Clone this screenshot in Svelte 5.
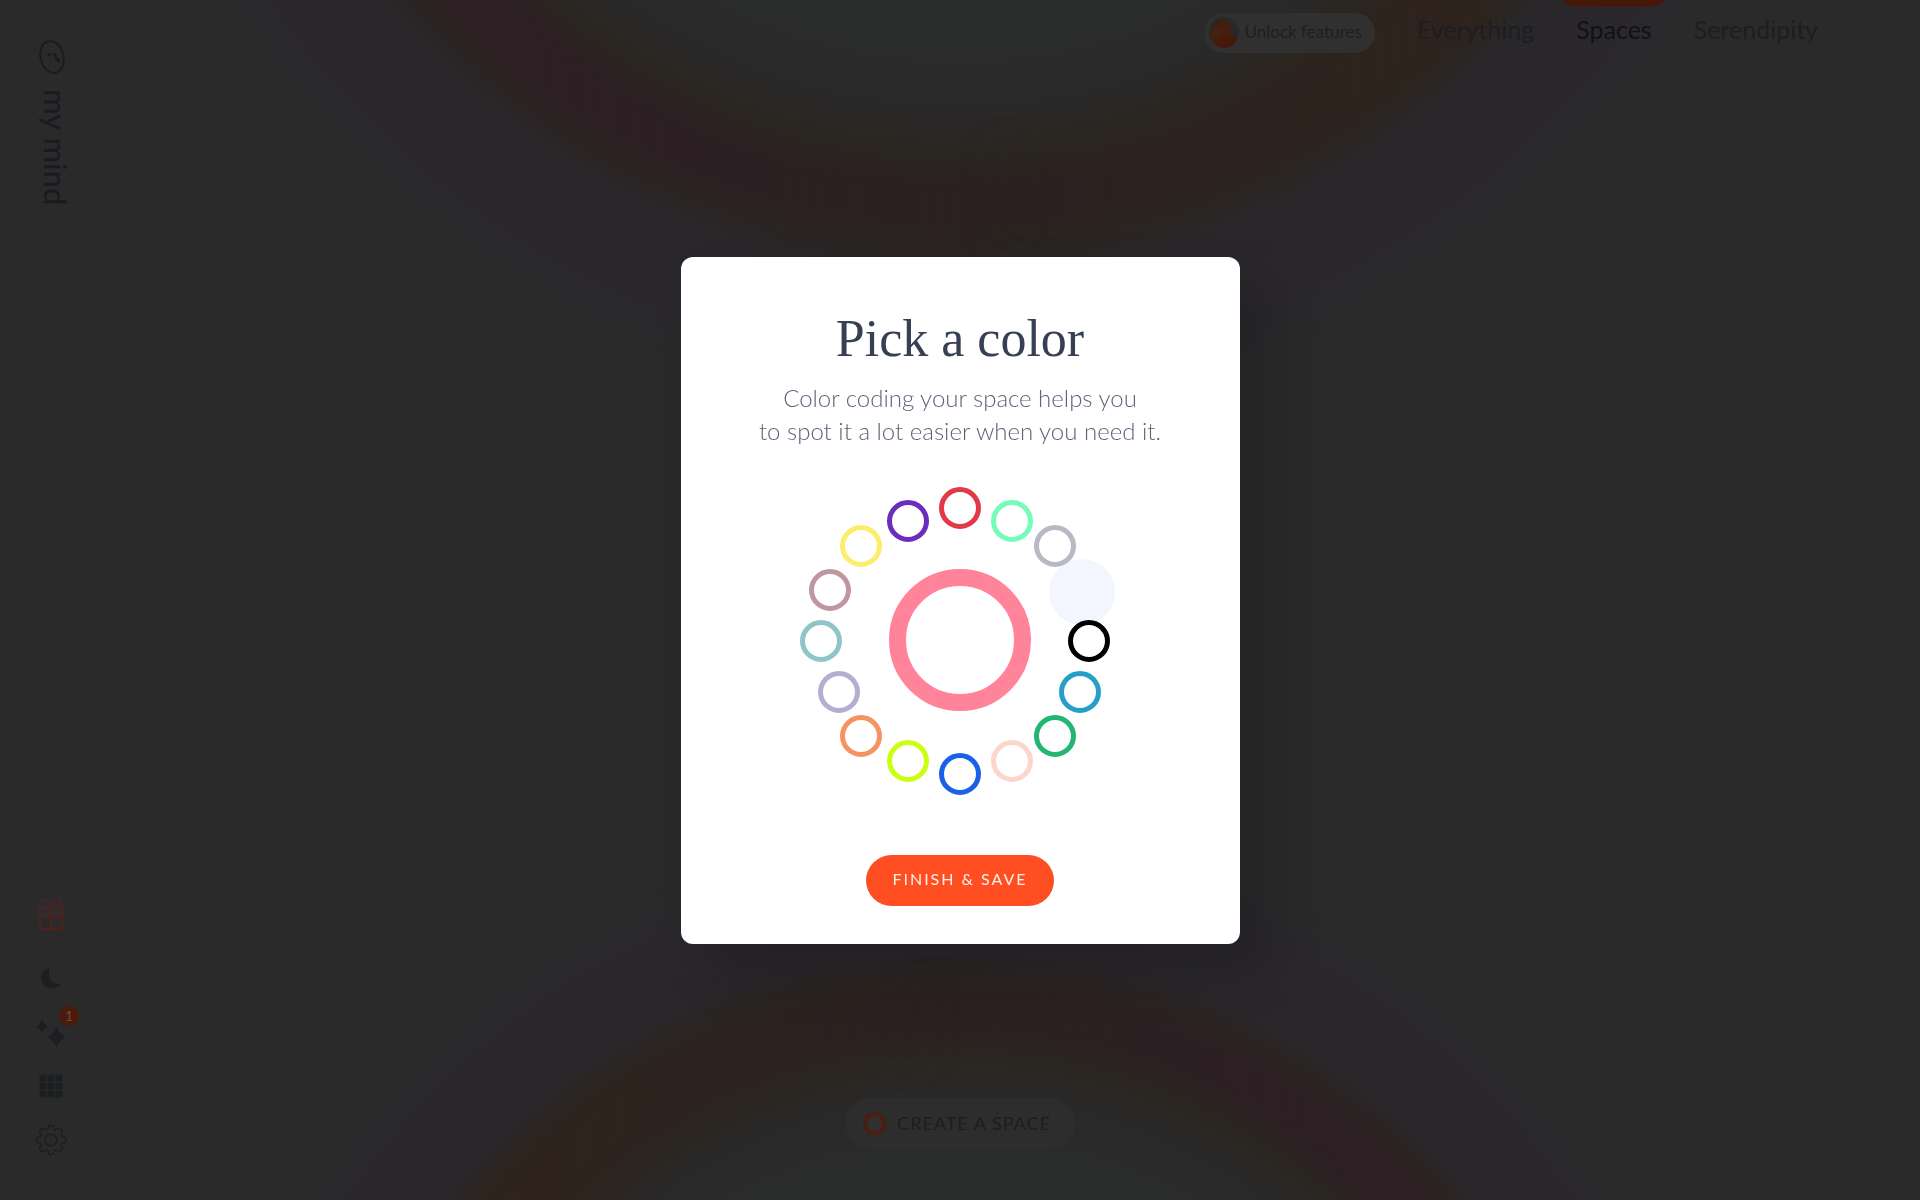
<script>
  const swatches = [
    { name: 'Red', color: '#e03a48', x: 0, y: -133 },
    { name: 'Mint', color: '#74fcb8', x: 52, y: -120 },
    { name: 'Silver', color: '#bab7c6', x: 95, y: -95 },
    { name: 'Black', color: '#000000', x: 129, y: 0 },
    { name: 'Cyan', color: '#259fc6', x: 120, y: 51 },
    { name: 'Green', color: '#23b572', x: 95, y: 95 },
    { name: 'Peach', color: '#fbd6cb', x: 52, y: 120 },
    { name: 'Blue', color: '#1c60e6', x: 0, y: 133 },
    { name: 'Lime', color: '#cbff12', x: -52, y: 120 },
    { name: 'Orange', color: '#f69362', x: -99, y: 95 },
    { name: 'Lavender', color: '#b5aed1', x: -121, y: 51 },
    { name: 'Teal', color: '#8fc5c8', x: -139, y: 0 },
    { name: 'Mauve', color: '#c096a1', x: -130, y: -51 },
    { name: 'Yellow', color: '#fcee6c', x: -99, y: -95 },
    { name: 'Violet', color: '#6a2dbd', x: -52, y: -120 }
  ];
  const pages = ['Everything', 'Spaces', 'Serendipity'];
  let picked = $state('#ff8399');
</script>

<div class="app">
  <div class="aura top"></div>
  <div class="aura bottom"></div>

  <aside>
    <a class="brand" href="#home" aria-label="my mind">
      <svg width="30" height="36" viewBox="0 0 30 36" fill="none" stroke="currentColor">
        <ellipse cx="16" cy="18" rx="11.500" ry="16" transform="rotate(-14 16 18)" stroke-width="1.800" />
        <path d="M18.500 15.500Q19.500 19.500 23 22" stroke-width="2.800" stroke-linecap="round" />
        <circle cx="13.500" cy="15.500" r="1.800" fill="currentColor" stroke="none" />
      </svg>
      <span>my mind</span>
    </a>
    <div class="tools">
      <button class="gift" aria-label="Gift">
        <svg width="28" height="32" viewBox="0 0 28 32" fill="none" stroke-width="2">
          <defs>
            <linearGradient id="giftInk" gradientUnits="userSpaceOnUse" x1="4" y1="2" x2="24" y2="30">
              <stop offset="0" stop-color="#40272e" />
              <stop offset="1" stop-color="#521f14" />
            </linearGradient>
          </defs>
          <g stroke="url(#giftInk)">
            <rect x="1.500" y="9" width="25" height="10" rx="2" fill="#302c2b" />
            <path d="M3 19v9a3 3 0 0 0 3 3h16a3 3 0 0 0 3-3v-9M14 9v22" />
            <path d="M14 9H6C3 6 4 2 7 2s6 2 7 7c1-5 4-7 7-7s4 4 1 7z" />
          </g>
        </svg>
      </button>
      <button class="moon" aria-label="Dark mode">
        <svg width="22" height="24" viewBox="0 0 22 24"><path fill="currentColor" d="M9.500 1.500C2 3.500-1 11 2.500 17.500S16 24.500 21 17.500C13 19 7 13 9.500 1.500z" /></svg>
      </button>
      <button class="spark" aria-label="What's new">
        <svg width="32" height="32" viewBox="0 0 32 32" fill="currentColor">
          <path d="M7 3q1.500 5.500 6 7.500-4.500 2-6 7.500-1.500-5.500-6-7.500 4.500-2 6-7.500z" />
          <path d="M21.500 10q2.500 8 9 11-6.500 3-9 11-2.500-8-9-11 6.500-3 9-11z" />
        </svg>
        <span class="badge">1</span>
      </button>
      <button class="grid" aria-label="Apps">
        <svg width="24" height="24" viewBox="0 0 24 24" fill="currentColor">
          {#each [0, 1, 2] as row}
            {#each [0, 1, 2] as col}
              <rect x={0.5 + col * 8} y={0.5 + row * 8} width="7" height="7" rx="1" />
            {/each}
          {/each}
        </svg>
      </button>
      <button class="gear" aria-label="Settings">
        <svg width="32" height="32" viewBox="0 0 32 32" fill="none" stroke="currentColor" stroke-width="1.500" stroke-linejoin="round">
          <path d="M13 5Q13.400 1.300 16 1.300T19 5q1 1 2.300.5Q24.600 3 26.400 5.600T26 10q.2 1.600 1.300 2Q31 13 31 16t-3.700 3q-1.200.8-1.300 2.200 2.400 3 .4 5t-5-.2q-1.400-.3-2.400 1-.4 3.700-3 3.700t-3-3.700q-1-1.200-2.400-1-3 2.300-5 .2t.4-5Q6 20 4.700 19 1 18.700 1 16t3.700-3Q6 12 6 10.700q-2.300-3-.4-5t5-.2Q12 6 13 5z" />
          <circle cx="16" cy="16" r="5.800" />
        </svg>
      </button>
    </div>
  </aside>

  <div class="main">
    <header>
      <button class="unlock">
        <svg width="30" height="32" viewBox="0 0 30 32">
          <defs>
            <linearGradient id="blobInk" x1="0" y1="0" x2=".7" y2="1">
              <stop offset="0" stop-color="#2c201b" />
              <stop offset=".45" stop-color="#48200f" />
              <stop offset="1" stop-color="#461405" />
            </linearGradient>
          </defs>
          <circle cx="15" cy="15" r="15" fill="#292826" />
          <path fill="url(#blobInk)" d="M12 3c6-1 10 3 9 9-1 4 2 7 7 6.500C27 27 21 31 14 31 6 30 1 23 2 15 3 8 6 4 12 3z" />
        </svg>
        <span>Unlock features</span>
      </button>
      <nav>
        {#each pages as page}
          <a href={'#' + page.toLowerCase()} class:active={page === 'Spaces'}>{page}</a>
        {/each}
      </nav>
    </header>
  </div>

  <footer>
    <button class="create"><span class="dot"></span>CREATE A SPACE</button>
  </footer>

  <div class="overlay">
    <form class="modal" role="dialog" aria-modal="true" aria-labelledby="title" onsubmit={(e) => e.preventDefault()}>
      <h1 id="title">Pick a color</h1>
      <p>Color coding your space helps you<br />to spot it a lot easier when you need it.</p>
      <div class="wheel" role="radiogroup" aria-label="Color">
        <span class="halo"></span>
        <span class="current" style:border-color={picked}></span>
        {#each swatches as s}
          <input
            type="radio"
            name="color"
            aria-label={s.name}
            value={s.color}
            bind:group={picked}
            style:--x="{s.x}px"
            style:--y="{s.y}px"
            style:border-color={s.color}
          />
        {/each}
      </div>
      <button class="save">FINISH &amp; SAVE</button>
    </form>
  </div>
</div>

<style>
  :global(body) {
    margin: 0;
    background: #2a2a2a;
  }
  .app {
    position: relative;
    display: grid;
    grid-template-columns: 104px 1fr;
    grid-template-rows: 1fr auto;
    min-height: 100vh;
    overflow: hidden;
    background: #2a2a2a;
    font-family: Lato, 'Open Sans', sans-serif;
    color: #1c1e22;
  }
  button {
    padding: 0;
    border: 0;
    background: none;
    color: inherit;
    font: inherit;
    cursor: pointer;
  }
  svg {
    display: block;
  }
  a {
    color: inherit;
    text-decoration: none;
  }

  /* Blurred colour rings behind the page */
  .aura,
  .aura::before,
  .aura::after {
    position: absolute;
    border-radius: 50%;
  }
  .aura {
    left: 50%;
    translate: -50% 0;
    background: radial-gradient(
      closest-side,
      #2a2c2b 56%,
      #2a292a 65%,
      #2a2721 70%,
      #2c2122 74%,
      #2c2122 78%,
      #2a2520 80%,
      #29272a 84%,
      #2a282c 94%,
      #2a2a2a 100%
    );
  }
  .aura::before,
  .aura::after {
    content: '';
    inset: 0;
  }
  .aura::before {
    background: radial-gradient(closest-side, transparent 70%, #2e2025 75%, #2e2025 78%, transparent 83%);
    mask-image: linear-gradient(to right, #000 25%, transparent 55%);
  }
  .aura::after {
    background: radial-gradient(closest-side, transparent 66%, #2f241c 74%, #2f241c 78%, transparent 83%);
    mask-image: linear-gradient(to left, #000 20%, transparent 50%);
  }
  .top {
    width: 1772px;
    height: 1772px;
    bottom: calc(100% - 417px);
  }
  .bottom {
    width: 1568px;
    height: 1568px;
    top: calc(100% - 377px);
    rotate: 180deg;
  }

  aside {
    position: relative;
    grid-row: 1 / 3;
    display: flex;
    flex-direction: column;
    align-items: center;
    justify-content: space-between;
    padding: 39px 2px 44px 0;
  }
  .brand {
    display: flex;
    flex-direction: column;
    align-items: center;
    gap: 14px;
    color: #1a1b20;
  }
  .brand span {
    padding-left: 10px;
    writing-mode: vertical-rl;
    font-size: 31px;
    line-height: 32px;
    font-weight: 500;
  }
  .tools {
    display: flex;
    flex-direction: column;
    align-items: center;
  }
  .moon {
    margin-top: 36px;
  }
  .spark {
    position: relative;
    margin-top: 26px;
  }
  .grid {
    margin-top: 26px;
    color: #1c1f22;
  }
  .gear {
    margin-top: 26px;
  }
  .badge {
    position: absolute;
    left: 24px;
    top: -10px;
    width: 20px;
    height: 20px;
    border-radius: 50%;
    background: #4b1a0a;
    color: #6b4a3e;
    font-size: 14px;
    line-height: 20px;
    text-align: center;
  }

  .main {
    position: relative;
  }
  header {
    display: flex;
    justify-content: flex-end;
    align-items: flex-start;
    gap: 42px;
    padding-right: 102px;
  }
  .unlock {
    display: flex;
    align-items: center;
    gap: 6px;
    height: 40px;
    margin-top: 13px;
    padding: 0 13px 0 5px;
    border-radius: 20px;
    background: #2f302f;
    color: #1e1f20;
    font-size: 17px;
  }
  .unlock span {
    padding-bottom: 3px;
  }
  nav {
    display: flex;
    gap: 42px;
  }
  nav a {
    position: relative;
    padding-top: 13px;
    font-size: 25px;
    line-height: 32px;
    color: #1e1d20;
  }
  nav .active {
    color: #121115;
  }
  nav .active::before {
    content: '';
    position: absolute;
    top: 0;
    left: -12px;
    right: -12px;
    height: 7px;
    border-radius: 0 0 20px 20px / 0 0 7px 7px;
    background: #46180a;
  }

  footer {
    position: absolute;
    bottom: 50px;
    left: 50%;
    translate: -50% 0;
  }
  .create {
    display: flex;
    align-items: center;
    gap: 11px;
    height: 52px;
    padding: 0 24px 2px 18px;
    border-radius: 26px;
    background: #2d2d2d;
    color: #1d1d22;
    font-size: 18px;
    letter-spacing: 1px;
  }
  .dot {
    box-sizing: border-box;
    width: 23px;
    height: 23px;
    border: 4px solid #4a1e10;
    border-radius: 50%;
    background: #333130;
  }

  .overlay {
    position: fixed;
    inset: 0;
    display: grid;
    place-items: center;
  }
  .modal {
    box-sizing: border-box;
    display: flex;
    flex-direction: column;
    align-items: center;
    width: 559px;
    max-width: 100%;
    padding: 50px 20px 38px;
    border-radius: 12px;
    background: #fff;
    box-shadow: 28px 28px 48px rgba(20, 16, 24, 0.25);
    text-align: center;
  }
  h1 {
    margin: 0;
    font-family: 'Liberation Serif', serif;
    font-size: 52px;
    line-height: 64px;
    font-weight: 400;
    color: #364052;
  }
  p {
    margin: 10px 0 0;
    font-size: 24px;
    line-height: 33px;
    font-weight: 300;
    color: #5d6478;
  }
  .wheel {
    position: relative;
    width: 320px;
    height: 310px;
    margin-top: 39px;
  }
  .wheel > * {
    position: absolute;
    box-sizing: border-box;
    left: calc(50% + var(--x, 0px));
    top: calc(50% + var(--y, 0px));
    translate: -50% -50%;
    margin: 0;
    border-radius: 50%;
  }
  .wheel input {
    appearance: none;
    width: 42px;
    height: 42px;
    border: 5px solid;
    cursor: pointer;
  }
  .wheel .current {
    --y: -1px;
    width: 142px;
    height: 142px;
    border: 17px solid;
  }
  .wheel .halo {
    --x: 122px;
    --y: -49px;
    width: 66px;
    height: 66px;
    background: #f4f6ff;
  }
  .save {
    height: 51px;
    margin-top: 59px;
    padding: 0 26px 3px;
    border-radius: 26px;
    background: #ff4f22;
    color: #fff0e8;
    font-size: 16px;
    letter-spacing: 2px;
  }
</style>
